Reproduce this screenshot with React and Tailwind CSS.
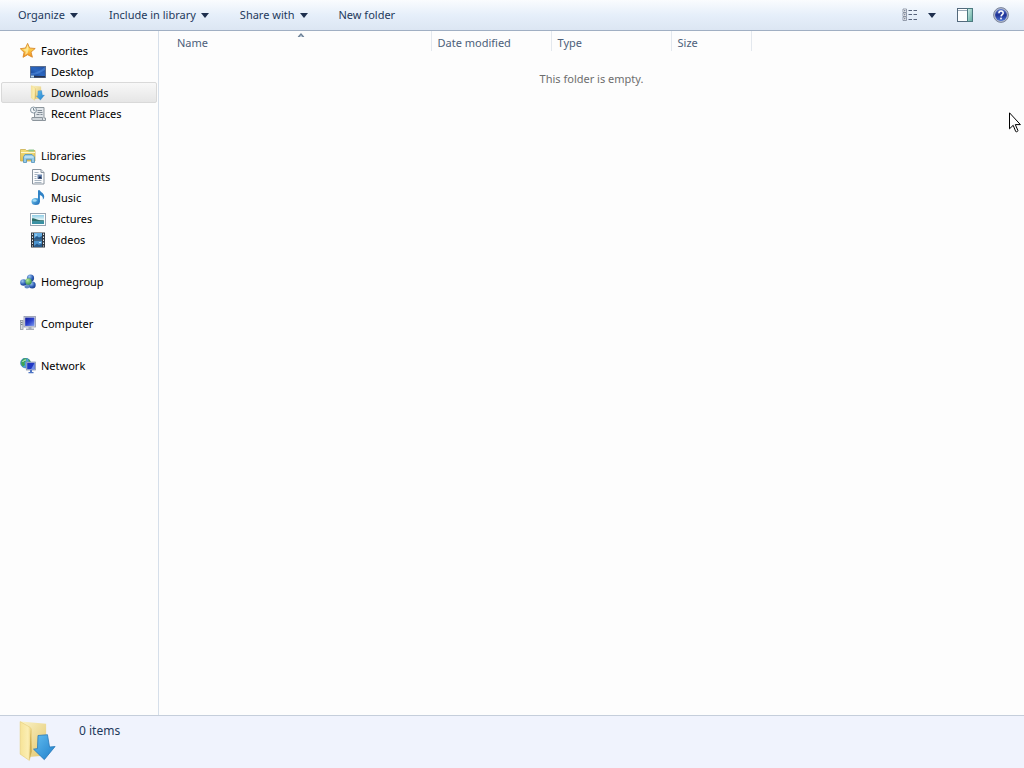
import React, { useState } from 'react';

function Caret() {
  return (
    <svg width="8" height="5" viewBox="0 0 8 5" aria-hidden="true">
      <path d="M0 0h8L4 5z" fill="#1e2f4e" />
    </svg>
  );
}

function StarIcon() {
  return (
    <svg width="16" height="16" viewBox="0 0 16 16" aria-hidden="true">
      <defs>
        <linearGradient id="star" x1="0" y1="0" x2="0" y2="1">
          <stop offset="0" stopColor="#ffe88a" />
          <stop offset="0.5" stopColor="#fbc640" />
          <stop offset="1" stopColor="#f08a20" />
        </linearGradient>
      </defs>
      <path d="M7.600.4l2 4.600 5.600.5-4.200 3.600 1.400 5.100-4.800-2.500L3 14.300l1.100-5L.3 5.700 5.500 5z" fill="url(#star)" stroke="#d98a2b" strokeWidth="0.9" strokeLinejoin="round" />
      <path d="M7.600 2.500l1 3.600-1 4.200L5 11.900l.8-3.200-2.600-2.300 3-.3z" fill="#fff3b5" opacity="0.7" />
    </svg>
  );
}

function DesktopIcon() {
  return (
    <svg width="16" height="16" viewBox="0 0 16 16" aria-hidden="true">
      <defs>
        <linearGradient id="desk" x1="0" y1="1" x2="1" y2="0">
          <stop offset="0" stopColor="#123a86" />
          <stop offset="0.5" stopColor="#2a66c0" />
          <stop offset="1" stopColor="#2450a0" />
        </linearGradient>
      </defs>
      <rect x="0.5" y="2.5" width="15" height="11" fill="url(#desk)" stroke="#5c6f8f" />
      <path d="M1 9c5 0 9-2 14-6v3c-5 3-9 5-14 5z" fill="#4f8bdd" opacity="0.6" />
      <path d="M1 12h14v1.500H1z" fill="#26324c" />
      <path d="M1 11.500h3v2H1z" fill="#b8d8ee" />
    </svg>
  );
}

function DownloadsIcon({ size = 16 }) {
  return (
    <svg width={size} height={size} viewBox="0 0 16 16" aria-hidden="true">
      <defs>
        <linearGradient id="dlBack" x1="0" y1="0" x2="1" y2="1">
          <stop offset="0" stopColor="#faf3c8" />
          <stop offset="1" stopColor="#e3c66c" />
        </linearGradient>
        <linearGradient id="dlFront" x1="0" y1="0" x2="1" y2="0">
          <stop offset="0" stopColor="#f6e396" />
          <stop offset="0.700" stopColor="#fbeeb4" />
          <stop offset="1" stopColor="#ecd17a" />
        </linearGradient>
        <linearGradient id="dlArrow" x1="0" y1="0" x2="1" y2="1">
          <stop offset="0" stopColor="#62bdf0" />
          <stop offset="1" stopColor="#1f7fcb" />
        </linearGradient>
      </defs>
      <path d="M1.500.6l9.600.8v12.100l-6.600.6z" fill="url(#dlBack)" />
      <path d="M1.200.6l3.600 2.100c.5.3.7.7.7 1.300v8.400l-.8 3L1.200 13z" fill="url(#dlFront)" stroke="#e3c872" strokeWidth="0.2" />
      <path d="M5.200 3.500l.4 8.500-.9 3.200z" fill="#b99234" opacity="0.6" />
      <path d="M8 5.900l3.600-.3.800 4.700 2.100-.2-4.100 5-4.100-4 1.500-.2z" fill="url(#dlArrow)" stroke="#2878b8" strokeWidth="0.3" strokeLinejoin="round" />
    </svg>
  );
}

function RecentIcon() {
  return (
    <svg width="16" height="16" viewBox="0 0 16 16" aria-hidden="true">
      <path d="M4.500 1.500h9.500v10.500h1.500v2.500H6.500c-1.500 0-2-1-2-2z" fill="#dfe4e8" stroke="#8c959c" />
      <path d="M2 11.500h10.500v3H3c-1.200 0-1.500-1.500-1-3z" fill="#cfd5da" stroke="#8c959c" />
      <path d="M7.500 4.500h4.500M7.500 6.500h5M6.500 8.500h3M10.500 8.500h2" stroke="#7f8a94" />
      <circle cx="3.500" cy="4" r="3" fill="#f4f7f9" stroke="#8797a4" />
      <path d="M3.500 2v2.200h1.800" fill="none" stroke="#60717f" strokeWidth="0.8" />
    </svg>
  );
}

function LibrariesIcon() {
  return (
    <svg width="16" height="16" viewBox="0 0 16 16" aria-hidden="true">
      <defs>
        <linearGradient id="lib" x1="0" y1="0" x2="0" y2="1">
          <stop offset="0" stopColor="#f3df7c" />
          <stop offset="1" stopColor="#e2c050" />
        </linearGradient>
      </defs>
      <path d="M.5 1.500h5l1 1h8.500V13H.5z" fill="url(#lib)" stroke="#c9ad50" strokeWidth="0.8" />
      <path d="M8.500 1.500h5.500v2H8.500z" fill="#8cc58c" />
      <path d="M1 4.500h14" stroke="#fff7cf" />
      <path d="M3.500 14.500V9L5 6.500h7L14.500 9v5.500h-3v-3.200H6.500v3.200z" fill="#95cbe9" stroke="#5291ba" strokeWidth="0.8" />
      <path d="M4.500 9h9" stroke="#dff2fb" />
    </svg>
  );
}

function DocumentIcon() {
  return (
    <svg width="16" height="16" viewBox="0 0 16 16" aria-hidden="true">
      <path d="M2.500.5h8.500l3 3v11.500H2.500z" fill="#fbfcfd" stroke="#8b959f" />
      <path d="M11 .5v3h3" fill="#dfe5ea" stroke="#8b959f" />
      <path d="M4.500 3.500h4M4.500 5.500h3M4.500 7.500h2M4.500 9.500h2M4.500 11.500h7M4.500 13.500h7" stroke="#a7b4c0" />
      <path d="M7.500 5.500h4.500v4.500H7.500z" fill="#6a86ae" />
      <path d="M8 9.500l2-2.500 2 2.500z" fill="#202f50" />
    </svg>
  );
}

function MusicIcon() {
  return (
    <svg width="16" height="16" viewBox="0 0 16 16" aria-hidden="true">
      <defs>
        <linearGradient id="note" x1="0" y1="0" x2="1" y2="1">
          <stop offset="0" stopColor="#75cdf4" />
          <stop offset="1" stopColor="#1763b0" />
        </linearGradient>
      </defs>
      <ellipse cx="5.700" cy="11.500" rx="4.200" ry="3.500" fill="url(#note)" />
      <path d="M8 .2h1.900c.3 2 4.500 2.800 4.300 6.400 0 1.500-.6 2.500-1.400 3.200.5-2.500-.5-4-2.900-4.700V12H8z" fill="#2f82c6" />
      <ellipse cx="4.700" cy="10.500" rx="2" ry="1.200" fill="#b9e8fb" opacity="0.8" />
    </svg>
  );
}

function PicturesIcon() {
  return (
    <svg width="16" height="16" viewBox="0 0 16 16" aria-hidden="true">
      <defs>
        <linearGradient id="sky" x1="0" y1="0" x2="0" y2="1">
          <stop offset="0" stopColor="#8fcde6" />
          <stop offset="0.5" stopColor="#e0f3f6" />
          <stop offset="1" stopColor="#2f8792" />
        </linearGradient>
      </defs>
      <rect x="0.500" y="2.500" width="15" height="12" fill="#fdfefe" stroke="#98a5b2" />
      <rect x="2" y="4" width="12" height="9" fill="url(#sky)" />
      <path d="M2 7.500c2-.7 3 .4 5 1 2.500.7 5 .7 7 1v1H2z" fill="#2e6e68" />
      <path d="M2 10.300h12V13H2z" fill="#3991a4" />
    </svg>
  );
}

function VideosIcon() {
  return (
    <svg width="16" height="16" viewBox="0 0 16 16" aria-hidden="true">
      <rect x="1" y="0.500" width="14" height="15" fill="#303841" />
      <rect x="4" y="1" width="8" height="6.500" fill="#64abe0" />
      <rect x="4" y="8.500" width="8" height="6.500" fill="#4c94cf" />
      <path d="M4 6.500l3-2.500 2 1.500 3-1.500v3.500H4zM4 14l3-2.500 2 1.500 3-1.500v3.500H4z" fill="#285a8a" />
      <path d="M5 3h2M9 10.500h2" stroke="#bde1f5" />
      <path d="M2.500 1.500v13M13.500 1.500v13" stroke="#e6eaee" strokeDasharray="1.500 1.500" />
    </svg>
  );
}

function HomegroupIcon() {
  return (
    <svg width="16" height="16" viewBox="0 0 16 16" aria-hidden="true">
      <defs>
        <radialGradient id="orbBlue" cx="0.350" cy="0.300" r="0.800">
          <stop offset="0" stopColor="#9cc8f0" />
          <stop offset="0.600" stopColor="#2d5cb4" />
          <stop offset="1" stopColor="#173a86" />
        </radialGradient>
        <radialGradient id="orbGreen" cx="0.350" cy="0.300" r="0.800">
          <stop offset="0" stopColor="#b4eb9c" />
          <stop offset="1" stopColor="#2b8b41" />
        </radialGradient>
      </defs>
      <path d="M4 9l7-5 1 8z" fill="none" stroke="#5f95c2" strokeWidth="2" />
      <circle cx="10.500" cy="4" r="3.600" fill="url(#orbBlue)" />
      <circle cx="3.500" cy="8.500" r="3.300" fill="url(#orbBlue)" />
      <circle cx="12.200" cy="11" r="3.500" fill="url(#orbBlue)" />
      <circle cx="8.500" cy="7.500" r="3.200" fill="url(#orbGreen)" />
      <ellipse cx="7" cy="12.800" rx="2.600" ry="1.800" fill="#5f87c5" />
    </svg>
  );
}

function ComputerIcon() {
  return (
    <svg width="16" height="16" viewBox="0 0 16 16" aria-hidden="true">
      <defs>
        <linearGradient id="screen" x1="0" y1="0" x2="1" y2="1">
          <stop offset="0" stopColor="#10189a" />
          <stop offset="0.500" stopColor="#2b41cc" />
          <stop offset="1" stopColor="#7c9bf0" />
        </linearGradient>
      </defs>
      <rect x="0.500" y="4.500" width="2.500" height="9" fill="#d8dce0" stroke="#8d959d" strokeWidth="0.800" />
      <path d="M1 6.500h1.500M1 8.500h1.500" stroke="#76808a" />
      <rect x="4" y="0.500" width="11.500" height="10.500" fill="#d5d9e4" stroke="#8e96ab" strokeWidth="0.800" />
      <rect x="5.200" y="1.600" width="9.200" height="8.300" fill="url(#screen)" />
      <path d="M8.500 11h3v1.500H14V14H6v-1.500h2.500z" fill="#a6adb8" />
    </svg>
  );
}

function NetworkIcon() {
  return (
    <svg width="16" height="16" viewBox="0 0 16 16" aria-hidden="true">
      <circle cx="5.500" cy="5" r="4.900" fill="#4e9fdd" stroke="#2c70ae" strokeWidth="0.600" />
      <path d="M1.700 2.500c2-2.500 4-2.500 5-2L6 3 4.500 4.500 5 7 3 8.500C.8 7 1 4.500 1.700 2.500zM8 1c2 .5 2.500 2 2.500 3L9 4.500z" fill="#3fa554" />
      <path d="M2.500 4c1-1.500 2-2 3.500-2" stroke="#d8f3e0" fill="none" />
      <rect x="6.300" y="4" width="9.200" height="8" fill="#c8d0e2" stroke="#7e8aa6" strokeWidth="0.700" />
      <rect x="7.200" y="4.800" width="7.400" height="6.400" fill="#2038c4" />
      <path d="M11 11.200l3.600-6.200v6.200z" fill="#6f8de8" />
      <path d="M10 12h2v2h1.500v1.200H8.500V14H10z" fill="#4d74c4" />
    </svg>
  );
}

function ViewIcon() {
  return (
    <svg width="16" height="14" viewBox="0 0 16 14" aria-hidden="true">
      <path d="M1 1h3.500v3.500H1zM1 5h3.500v3.500H1zM1 9h3.500v3.500H1z" fill="#fff" stroke="#7c8798" strokeWidth="0.800" />
      <path d="M2 2.800h1.500M2 6.800h1.500M2 10.800h1.500" stroke="#4a5a78" />
      <path d="M6.500 2.500h3.500M11.500 2.500h3.500M6.500 6.500h3.500M11.500 6.500h3.500M6.500 11.500h3.500M11.500 11.500h3.500" stroke="#56627a" />
    </svg>
  );
}

function PreviewIcon() {
  return (
    <svg width="16" height="14" viewBox="0 0 16 14" aria-hidden="true">
      <defs>
        <linearGradient id="pane" x1="0" y1="0" x2="1" y2="1">
          <stop offset="0" stopColor="#d3eee9" />
          <stop offset="1" stopColor="#5ba99d" />
        </linearGradient>
      </defs>
      <rect x="0.500" y="0.500" width="15" height="13" fill="#fdfefe" stroke="#53697c" />
      <path d="M1 2.500h9.500" stroke="#9caab8" />
      <rect x="10.500" y="0.500" width="5" height="13" fill="url(#pane)" stroke="#4c7a80" />
    </svg>
  );
}

function HelpIcon() {
  return (
    <svg width="16" height="16" viewBox="0 0 16 16" aria-hidden="true">
      <defs>
        <linearGradient id="help" x1="0" y1="0" x2="0" y2="1">
          <stop offset="0" stopColor="#5b78cc" />
          <stop offset="0.500" stopColor="#1c2f94" />
          <stop offset="1" stopColor="#4c74d4" />
        </linearGradient>
      </defs>
      <circle cx="8" cy="8" r="7.400" fill="#b4bccf" stroke="#707a94" strokeWidth="0.900" />
      <circle cx="8" cy="8" r="5.900" fill="url(#help)" />
      <path d="M5.900 6.200c.1-3 4.500-2.700 4.300-.1-.1 1.500-2 1.600-2.100 3.300" fill="none" stroke="#fff" strokeWidth="1.500" />
      <circle cx="8" cy="11.500" r="0.900" fill="#fff" />
    </svg>
  );
}

function Cursor() {
  return (
    <svg className="pointer-events-none absolute right-[3px] top-[112px]" width="12" height="21" viewBox="0 0 12 21" aria-hidden="true">
      <path d="M.5.8v16l3.700-3.500 2.500 6.200c1 .7 2.300 0 2.200-1l-2.600-5.900h5.100z" fill="#fff" stroke="#000" />
    </svg>
  );
}

const menus = [
  { label: 'Organize', caret: true },
  { label: 'Include in library', caret: true },
  { label: 'Share with', caret: true },
  { label: 'New folder', caret: false },
];

const groups = [
  {
    label: 'Favorites',
    icon: StarIcon,
    items: [
      { label: 'Desktop', icon: DesktopIcon },
      { label: 'Downloads', icon: DownloadsIcon },
      { label: 'Recent Places', icon: RecentIcon },
    ],
  },
  {
    label: 'Libraries',
    icon: LibrariesIcon,
    items: [
      { label: 'Documents', icon: DocumentIcon },
      { label: 'Music', icon: MusicIcon },
      { label: 'Pictures', icon: PicturesIcon },
      { label: 'Videos', icon: VideosIcon },
    ],
  },
  { label: 'Homegroup', icon: HomegroupIcon, items: [] },
  { label: 'Computer', icon: ComputerIcon, items: [] },
  { label: 'Network', icon: NetworkIcon, items: [] },
];

function NavItem({ label, icon: Icon, nested, selected, onSelect }) {
  return (
    <li className="px-px">
      <a
        href={`#${label}`}
        onClick={() => onSelect(label)}
        className={`flex h-[21px] items-center gap-[5px] rounded-xs border ${nested ? 'pl-7' : 'pl-[18px]'} ${selected
            ? 'border-[#d9d9d9] bg-gradient-to-b from-[#f8f8f8] to-[#e6e6e6]'
            : 'border-transparent'
          }`}
      >
        <Icon />
        {label}
      </a>
    </li>
  );
}

export default function App() {
  const [current, setCurrent] = useState('Downloads');

  return (
    <div className="relative flex min-h-screen flex-col bg-[#fdfdfd] font-['Noto_Sans',sans-serif] text-[11px] leading-4 text-black">
      <header className="flex h-[31px] items-center justify-between border-b border-[#a0afc3] bg-gradient-to-b from-[#fafcfe] via-[#e6effa] to-[#dce6f3] pl-[3px] text-[#1e395b]">
        <nav className="flex gap-px">
          {menus.map((m) => (
            <button key={m.label} className="flex items-center gap-[5px] px-[15px]">
              {m.label}
              {m.caret && <Caret />}
            </button>
          ))}
        </nav>
        <div className="flex items-center pr-[15px]">
          <button aria-label="Change your view"><ViewIcon /></button>
          <button aria-label="More options" className="ml-[10px]"><Caret /></button>
          <button aria-label="Show the preview pane" className="ml-[21px]"><PreviewIcon /></button>
          <button aria-label="Get help" className="ml-5"><HelpIcon /></button>
        </div>
      </header>

      <div className="flex flex-1">
        <aside className="w-[159px] shrink-0 border-r border-[#d6dfea] pt-[9px]">
          <ul className="flex flex-col gap-[21px]">
            {groups.map((g) => (
              <li key={g.label}>
                <ul>
                  <NavItem label={g.label} icon={g.icon} selected={current === g.label} onSelect={setCurrent} />
                  {g.items.map((item) => (
                    <NavItem
                      key={item.label}
                      label={item.label}
                      icon={item.icon}
                      nested
                      selected={current === item.label}
                      onSelect={setCurrent}
                    />
                  ))}
                </ul>
              </li>
            ))}
          </ul>
        </aside>

        <main className="flex-1">
          <table className="w-full table-fixed">
            <colgroup>
              <col className="w-[272px]" />
              <col className="w-[120px]" />
              <col className="w-[120px]" />
              <col className="w-[80px]" />
              <col />
            </colgroup>
            <thead>
              <tr className="h-5 text-left text-[#4c607a] [&>th]:p-0 [&>th]:align-top [&>th]:font-normal">
                <th className="border-r border-[#e3e8ee]">
                  <div className="relative ml-3 pl-1.5 pt-1">
                    Name
                    <svg className="absolute left-1/2 top-0.5 -translate-x-1/2" width="7" height="4" viewBox="0 0 7 4" aria-hidden="true">
                      <path d="M0 4l3.500-4L7 4z" fill="#6b7f96" />
                      <path d="M2 4l1.500-2L5 4z" fill="#c5d3e0" />
                    </svg>
                  </div>
                </th>
                <th className="border-r border-[#e3e8ee]"><div className="pl-1.5 pt-1">Date modified</div></th>
                <th className="border-r border-[#e3e8ee]"><div className="pl-1.5 pt-1">Type</div></th>
                <th className="border-r border-[#e3e8ee]"><div className="pl-1.5 pt-1">Size</div></th>
                <td />
              </tr>
            </thead>
            <tbody>
              <tr>
                <td colSpan={5} className="pt-5 text-center text-[#6d6d6d]">This folder is empty.</td>
              </tr>
            </tbody>
          </table>
        </main>
      </div>

      <footer className="flex h-[53px] items-start border-t border-[#c5cedb] bg-[#f0f3fd] pl-[17px] pt-1 text-[12px] text-[#1e395b]">
        <DownloadsIcon size={42} />
        <span className="pl-5 pt-[3px]">0 items</span>
      </footer>

      <Cursor />
    </div>
  );
}
